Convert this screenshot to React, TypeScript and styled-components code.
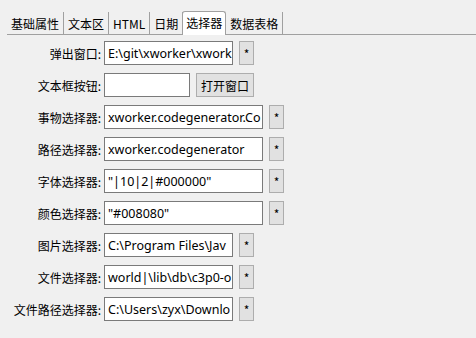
import { Fragment } from 'react';
import styled, { createGlobalStyle } from 'styled-components';

const GlobalStyle = createGlobalStyle`
  html, body {
    margin: 0;
    padding: 0;
    background: #f0f0f0;
    font-family: "Noto Sans", "Noto Sans CJK SC", sans-serif;
    font-size: 12px;
    color: #000;
  }
`;

const Page = styled.div`
  width: 476px;
  height: 338px;
  overflow: hidden;
  padding-top: 11px;
  box-sizing: border-box;
`;

const TabBar = styled.div`
  display: flex;
  align-items: flex-end;
  margin-left: 7px;
  height: 23px;
  border-bottom: 1px solid #a0a0a0;
`;

const Tab = styled.div<{ $active?: boolean }>`
  height: 22px;
  padding: 0 4px;
  display: flex;
  align-items: center;
  border-right: 1px solid #a0a0a0;
  box-sizing: border-box;
  background: ${(p) => (p.$active ? '#ffffff' : 'transparent')};
  font-family: "Noto Sans CJK SC", sans-serif;
  font-size: 12px;
  ${(p) =>
    p.$active &&
    `
    height: 24px;
    margin-bottom: -1px;
    margin-left: -1px;
    border: 1px solid #a0a0a0;
    border-bottom: none;
    border-radius: 3px 3px 0 0;
    padding: 0 3px 2px;
  `}
`;

const Form = styled.div`
  display: grid;
  grid-template-columns: 101px auto;
  row-gap: 8px;
  column-gap: 3px;
  margin-top: 6px;
  align-items: center;
`;

const Label = styled.div`
  text-align: right;
  font-family: "Noto Sans CJK SC", sans-serif;
  font-size: 12px;
  white-space: nowrap;
`;

const Field = styled.div`
  display: flex;
  align-items: center;
  gap: 6px;
`;

const Input = styled.div<{ $w: number }>`
  width: ${(p) => p.$w}px;
  height: 24px;
  box-sizing: border-box;
  border: 1px solid #7a7a7a;
  background: #fff;
  padding: 0 3px;
  display: flex;
  align-items: center;
  overflow: hidden;
  white-space: nowrap;
  font-family: "Noto Sans", "Noto Sans CJK SC", sans-serif;
  font-size: 12.5px;
`;

const Button = styled.div<{ $w: number }>`
  width: ${(p) => p.$w}px;
  height: 24px;
  box-sizing: border-box;
  border: 1px solid #adadad;
  background: #e1e1e1;
  display: flex;
  align-items: center;
  justify-content: center;
  font-family: "Noto Sans CJK SC", sans-serif;
  font-size: 12px;
`;

const tabs = ['基础属性', '文本区', 'HTML', '日期', '选择器', '数据表格'];

const rows: { label: string; value: string; w: number; btn: string; bw: number }[] = [
  { label: '弹出窗口:', value: 'E:\\git\\xworker\\xwork', w: 129, btn: '*', bw: 15 },
  { label: '文本框按钮:', value: '', w: 86, btn: '打开窗口', bw: 58 },
  { label: '事物选择器:', value: 'xworker.codegenerator.Co', w: 159, btn: '*', bw: 15 },
  { label: '路径选择器:', value: 'xworker.codegenerator', w: 159, btn: '*', bw: 15 },
  { label: '字体选择器:', value: '"|10|2|#000000"', w: 159, btn: '*', bw: 15 },
  { label: '颜色选择器:', value: '"#008080"', w: 159, btn: '*', bw: 15 },
  { label: '图片选择器:', value: 'C:\\Program Files\\Jav', w: 129, btn: '*', bw: 15 },
  { label: '文件选择器:', value: 'world|\\lib\\db\\c3p0-o', w: 129, btn: '*', bw: 15 },
  { label: '文件路径选择器:', value: 'C:\\Users\\zyx\\Downlo', w: 129, btn: '*', bw: 15 },
];

export default function App() {
  return (
    <Page>
      <GlobalStyle />
      <TabBar>
        {tabs.map((t) => (
          <Tab key={t} $active={t === '选择器'}>
            {t}
          </Tab>
        ))}
      </TabBar>
      <Form>
        {rows.map((r) => (
          <Fragment key={r.label}>
            <Label>{r.label}</Label>
            <Field>
              <Input $w={r.w}>{r.value}</Input>
              <Button $w={r.bw}>{r.btn}</Button>
            </Field>
          </Fragment>
        ))}
      </Form>
    </Page>
  );
}
